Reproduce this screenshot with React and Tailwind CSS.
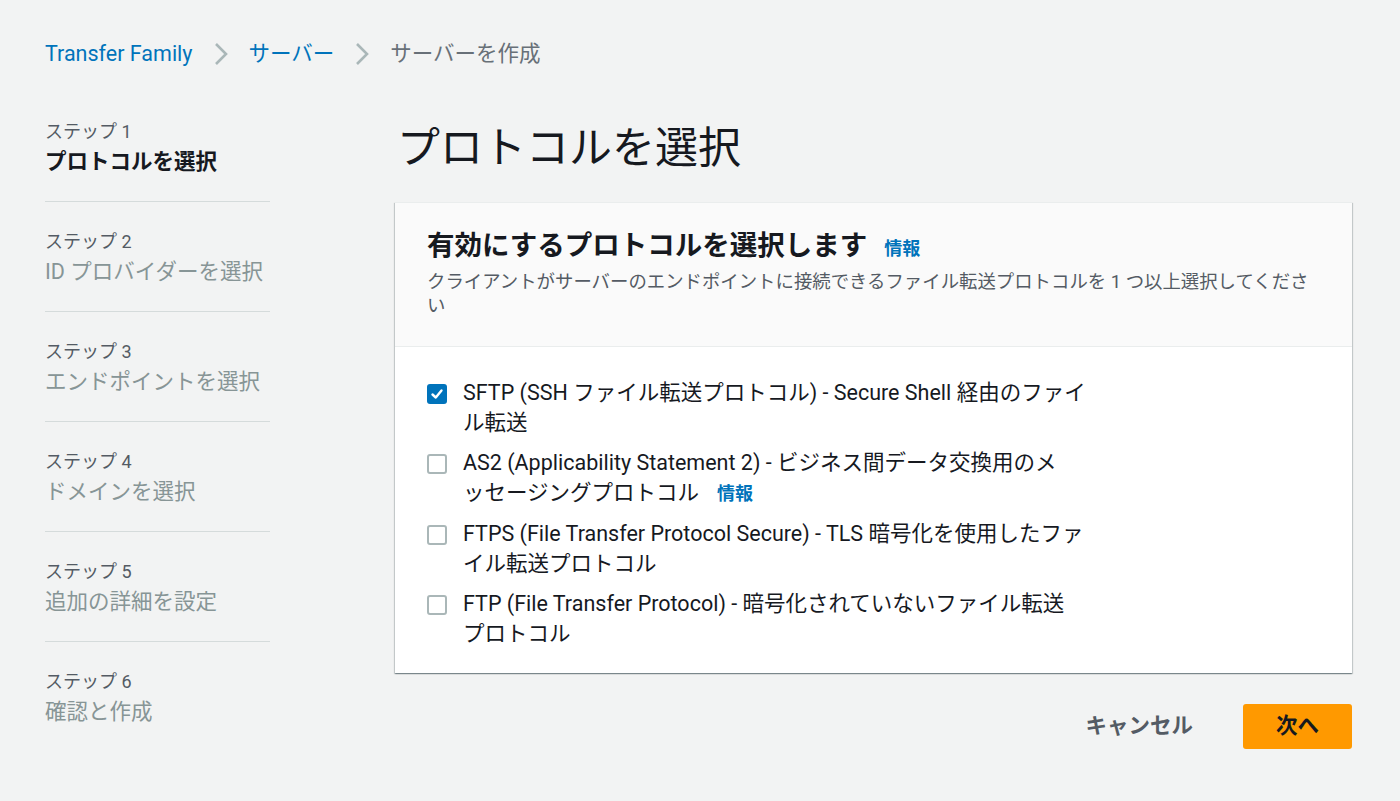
import React from "react";

const FONT = { fontFamily: 'Roboto, "Noto Sans CJK JP", "Noto Sans", sans-serif' };

function Chevron() {
  return (
    <svg width="14" height="24" viewBox="0 0 14 24" className="mx-[21px]">
      <polyline points="2,2 12,12 2,22" fill="none" stroke="#aab7b8" strokeWidth="2.6" />
    </svg>
  );
}

function Checkbox({ checked }) {
  if (checked) {
    return (
      <div className="mt-[6px] w-[20px] h-[20px] rounded-[3px] bg-[#0073bb] flex items-center justify-center shrink-0">
        <svg width="14" height="14" viewBox="0 0 14 14">
          <polyline points="2.5,7.5 5.8,10.5 11.5,3.5" fill="none" stroke="#fff" strokeWidth="2.4" strokeLinecap="round" strokeLinejoin="round" />
        </svg>
      </div>
    );
  }
  return <div className="mt-[6px] w-[20px] h-[20px] rounded-[3px] border-2 border-[#aab7b8] bg-white shrink-0" />;
}

function Item({ checked, lines, info }) {
  return (
    <div className="flex gap-[16px]">
      <Checkbox checked={checked} />
      <div className="text-[21.5px] leading-[30px] text-[#16191f] whitespace-nowrap">
        <div>{lines[0]}</div>
        <div>
          {lines[1]}
          {info && <span className="ml-[18px] text-[18px] font-bold text-[#0073bb]">情報</span>}
        </div>
      </div>
    </div>
  );
}

const steps = [
  ["ステップ 1", "プロトコルを選択"],
  ["ステップ 2", "ID プロバイダーを選択"],
  ["ステップ 3", "エンドポイントを選択"],
  ["ステップ 4", "ドメインを選択"],
  ["ステップ 5", "追加の詳細を設定"],
  ["ステップ 6", "確認と作成"],
];

export default function App() {
  return (
    <div style={FONT} className="w-[1400px] h-[801px] bg-[#f2f3f3] pl-[45px] pt-[39px] overflow-hidden">
      {/* breadcrumb */}
      <div className="flex items-center h-[30px] text-[21.5px]">
        <span className="text-[#0073bb]">Transfer Family</span>
        <Chevron />
        <span className="text-[#0073bb]">サーバー</span>
        <Chevron />
        <span className="text-[#687078]">サーバーを作成</span>
      </div>

      <div className="flex">
        {/* sidebar */}
        <div className="w-[225px] mt-[52px] shrink-0">
          {steps.map(([label, title], i) => (
            <div
              key={i}
              className={
                (i === 0 ? "pt-0" : "pt-[29px]") +
                " pb-[24px] " +
                (i < steps.length - 1 ? "border-b border-[#d5dbdb]" : "")
              }
            >
              <div className="text-[18px] leading-[22px] text-[#545b64]">{label}</div>
              <div
                className={
                  "mt-[4px] text-[21.5px] leading-[30px] " +
                  (i === 0 ? "font-bold text-[#16191f]" : "text-[#879596]")
                }
              >
                {title}
              </div>
            </div>
          ))}
        </div>

        {/* main */}
        <div className="ml-[125px] w-[957px] mt-[54px]">
          <h1 className="text-[43px] leading-[50px] text-[#16191f] ml-[2px]">プロトコルを選択</h1>

          <div className="mt-[29px] bg-white border-t border-[#eaeded] shadow-[0_1px_1px_0_rgba(0,28,36,0.3),1px_1px_1px_0_rgba(0,28,36,0.15),-1px_1px_1px_0_rgba(0,28,36,0.15)]">
            <div className="bg-[#fafafa] border-b border-[#eaeded] px-[32px] pt-[25px] pb-[28px]">
              <div className="flex items-baseline">
                <span className="text-[27.5px] leading-[36px] font-bold text-[#16191f]">有効にするプロトコルを選択します</span>
                <span className="ml-[17px] text-[18px] font-bold text-[#0073bb]">情報</span>
              </div>
              <div className="mt-[6px] text-[18.4px] leading-[24px] text-[#545b64] whitespace-nowrap">
                クライアントがサーバーのエンドポイントに接続できるファイル転送プロトコルを 1 つ以上選択してくださ
                <br />い
              </div>
            </div>
            <div className="px-[32px] pt-[31px] pb-[24px] flex flex-col gap-[10px]">
              <Item checked lines={["SFTP (SSH ファイル転送プロトコル) - Secure Shell 経由のファイ", "ル転送"]} />
              <Item lines={["AS2 (Applicability Statement 2) - ビジネス間データ交換用のメ", "ッセージングプロトコル"]} info />
              <Item lines={["FTPS (File Transfer Protocol Secure) - TLS 暗号化を使用したファ", "イル転送プロトコル"]} />
              <Item lines={["FTP (File Transfer Protocol) - 暗号化されていないファイル転送", "プロトコル"]} />
            </div>
          </div>

          <div className="flex justify-end items-center mt-[31px]">
            <button className="text-[21.5px] font-bold text-[#545b64] px-[20px] h-[45px] mr-[30px]">キャンセル</button>
            <button className="w-[109px] h-[45px] bg-[#ff9900] rounded-[3px] text-[21.5px] font-bold text-[#16191f]">次へ</button>
          </div>
        </div>
      </div>
    </div>
  );
}
